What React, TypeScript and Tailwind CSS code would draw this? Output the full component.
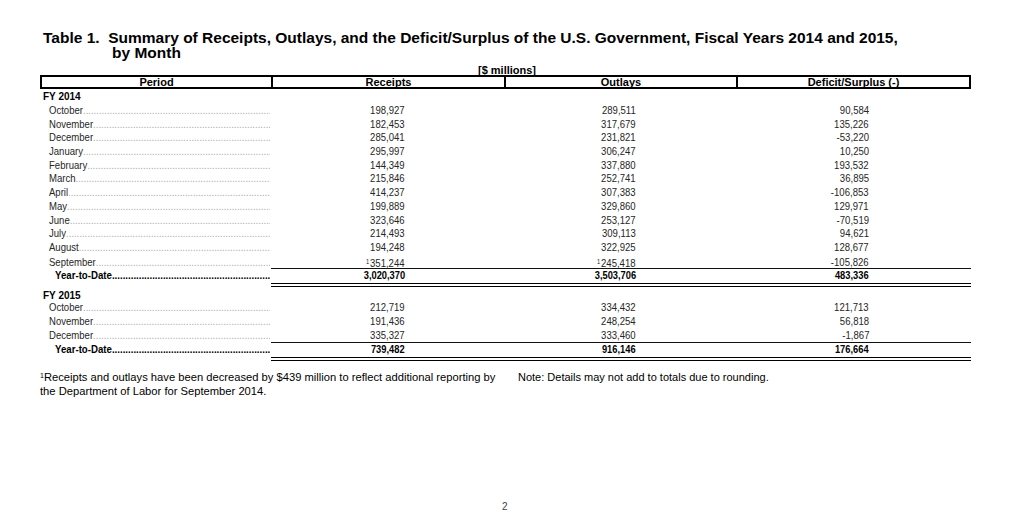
import type { ReactNode } from "react";

// ---------------------------------------------------------------------------
// Data ($ millions)
// ---------------------------------------------------------------------------

type Row = { label: string; r: string; o: string; d: string; sup?: boolean };

const FY14: Row[] = [
  { label: "October", r: "198,927", o: "289,511", d: "90,584" },
  { label: "November", r: "182,453", o: "317,679", d: "135,226" },
  { label: "December", r: "285,041", o: "231,821", d: "-53,220" },
  { label: "January", r: "295,997", o: "306,247", d: "10,250" },
  { label: "February", r: "144,349", o: "337,880", d: "193,532" },
  { label: "March", r: "215,846", o: "252,741", d: "36,895" },
  { label: "April", r: "414,237", o: "307,383", d: "-106,853" },
  { label: "May", r: "199,889", o: "329,860", d: "129,971" },
  { label: "June", r: "323,646", o: "253,127", d: "-70,519" },
  { label: "July", r: "214,493", o: "309,113", d: "94,621" },
  { label: "August", r: "194,248", o: "322,925", d: "128,677" },
  { label: "September", r: "351,244", o: "245,418", d: "-105,826", sup: true },
];
const FY14_TOTAL = { r: "3,020,370", o: "3,503,706", d: "483,336" };

const FY15: Row[] = [
  { label: "October", r: "212,719", o: "334,432", d: "121,713" },
  { label: "November", r: "191,436", o: "248,254", d: "56,818" },
  { label: "December", r: "335,327", o: "333,460", d: "-1,867" },
];
const FY15_TOTAL = { r: "739,482", o: "916,146", d: "176,664" };

// Period | Receipts | Outlays | Deficit — dividers land at x = 271 / 504 / 736
const COLS = "grid grid-cols-[231px_233px_232px_235px]";
const DOTS = ".".repeat(160);

// ---------------------------------------------------------------------------
// Pieces
// ---------------------------------------------------------------------------

function Sup() {
  return <span className="mr-[1px] align-[3px] text-[7px]">1</span>;
}

// Condensed figure: the source uses a narrow face, so squeeze Arial a bit
function Fig({ children, pr }: { children: ReactNode; pr: string }) {
  return (
    <div className={`${pr} text-right`}>
      <span className="inline-block origin-right scale-x-[0.81] whitespace-nowrap">{children}</span>
    </div>
  );
}

function Nums({ r, o, d, sup }: { r: string; o: string; d: string; sup?: boolean }) {
  return (
    <>
      <Fig pr="pr-[99px]">
        {sup && <Sup />}
        {r}
      </Fig>
      <Fig pr="pr-[100px]">
        {sup && <Sup />}
        {o}
      </Fig>
      <Fig pr="pr-[102px]">{d}</Fig>
    </>
  );
}

function MonthRow({ row }: { row: Row }) {
  return (
    <div className={`${COLS} h-[13.7px] items-center text-[11.8px] leading-[13.7px] text-[#262626]`}>
      <div className="pl-[9px]">
        <div className="flex w-[273px] origin-left scale-x-[0.81] items-baseline whitespace-nowrap">
          <span>{row.label}</span>
          <span className="min-w-0 flex-1 overflow-hidden text-[#a8a8a8]">{DOTS}</span>
        </div>
      </div>
      <Nums r={row.r} o={row.o} d={row.d} sup={row.sup} />
    </div>
  );
}

function TotalRow({ r, o, d }: { r: string; o: string; d: string }) {
  return (
    <>
      <div className={COLS}>
        <div />
        <div className="col-span-3 h-px bg-[#111]" />
      </div>
      <div className={`${COLS} h-[13px] items-center text-[11.5px] font-bold leading-[13px] text-black`}>
        <div className="pl-[15px]">
          <div className="flex w-[256px] origin-left scale-x-[0.84] items-baseline whitespace-nowrap">
            <span>Year-to-Date</span>
            <span className="min-w-0 flex-1 overflow-hidden">{DOTS}</span>
          </div>
        </div>
        <Nums r={r} o={o} d={d} />
      </div>
      <div className={`${COLS} mt-[1px]`}>
        <div />
        <div className="col-span-3 h-[4px] border-y-[1.5px] border-black" />
      </div>
    </>
  );
}

function FiscalLabel({ children }: { children: ReactNode }) {
  return <div className="h-[14px] pl-[3px] text-[10px] font-bold leading-[14px]">{children}</div>;
}

// ---------------------------------------------------------------------------
// Page
// ---------------------------------------------------------------------------

export default function App() {
  return (
    <div className="flex h-[512px] w-[1024px] flex-col bg-white font-['Liberation_Sans',sans-serif] text-black">
      {/* Title */}
      <div className="pl-[43px] pt-[30px] text-[15.5px] font-bold leading-[15px]">
        <div className="whitespace-pre">
          Table 1.  Summary of Receipts, Outlays, and the Deficit/Surplus of the U.S. Government, Fiscal Years 2014 and 2015,
        </div>
        <div className="pl-[69px]">by Month</div>
      </div>

      <div className="ml-[40px] w-[931px]">
        <div className="mt-[5px] pl-[3px] text-center text-[11px] font-bold leading-[10px]">[$ millions]</div>

        {/* Header */}
        <div className="grid h-[14px] grid-cols-[229px_233px_232px_233px] border-2 border-black text-center text-[11px] font-bold leading-[10px]">
          <div>Period</div>
          <div className="border-l-2 border-black">Receipts</div>
          <div className="border-l-2 border-black">Outlays</div>
          <div className="border-l-2 border-black">Deficit/Surplus (-)</div>
        </div>

        {/* FY 2014 */}
        <div className="mt-[1px]">
          <FiscalLabel>FY 2014</FiscalLabel>
          {FY14.map((row) => (
            <MonthRow key={`14-${row.label}`} row={row} />
          ))}
          <TotalRow {...FY14_TOTAL} />
        </div>

        {/* FY 2015 */}
        <div className="mt-[1px]">
          <div className="h-[13px] pl-[3px] pt-[2px] text-[10px] font-bold leading-[12px]">FY 2015</div>
          {FY15.map((row) => (
            <MonthRow key={`15-${row.label}`} row={row} />
          ))}
          <TotalRow {...FY15_TOTAL} />
        </div>
      </div>

      {/* Notes */}
      <div className="ml-[40px] mt-[8px] flex leading-[14px]">
        <div className="w-[478px] text-[11.2px]">
          <span className="align-[3px] text-[7px]">1</span>
          Receipts and outlays have been decreased by $439 million to reflect additional reporting by
          <br />
          the Department of Labor for September 2014.
        </div>
        <div className="pt-[1px] text-[11px]">Note: Details may not add to totals due to rounding.</div>
      </div>

      <div className="mt-auto pl-[502px] text-[10px] leading-[10px] text-[#444]">2</div>
    </div>
  );
}
